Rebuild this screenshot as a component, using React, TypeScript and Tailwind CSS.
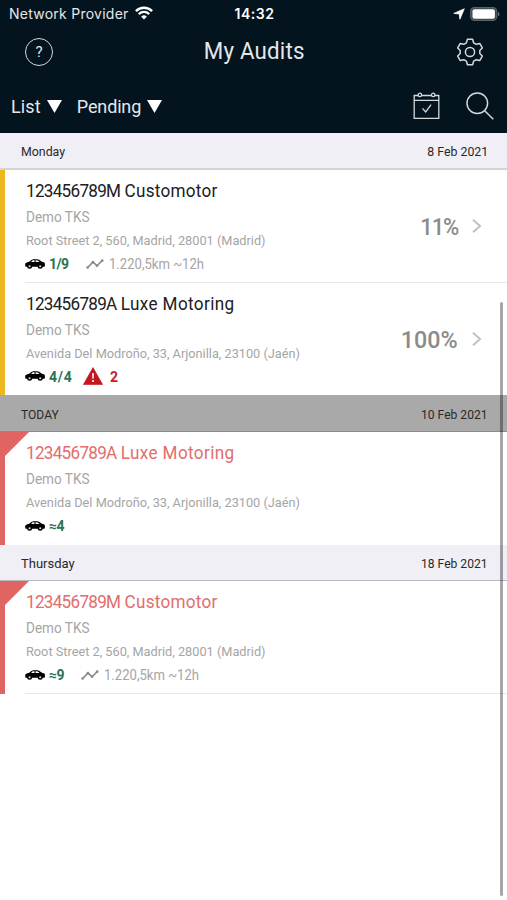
import type { ReactNode } from "react";

type Audit = {
  number: string;
  name: string;
  nameClass: string;
  address: string;
  count: string;
  countClass: string;
  route?: boolean;
  warnings?: number;
  percent?: string;
  percentClass?: string;
  overdue?: boolean;
  divider?: boolean;
};

type Section = {
  label: string;
  labelClass: string;
  date: string;
  dateClass: string;
  headerClass: string;
  audits: Audit[];
};

const customotor = {
  number: "123456789M",
  name: "Customotor",
  nameClass: "tracking-[0.3px]",
  address: "Root Street 2, 560, Madrid, 28001 (Madrid)",
};

const luxe = {
  number: "123456789A",
  name: "Luxe Motoring",
  nameClass: "tracking-[0.4px]",
  address: "Avenida Del Modroño, 33, Arjonilla, 23100 (Jaén)",
};

const sections: Section[] = [
  {
    label: "Monday",
    labelClass: "scale-x-[0.95]",
    date: "8 Feb 2021",
    dateClass: "scale-x-[0.95]",
    headerClass: "h-[37px] border-b-2 border-[#d4d4d5] bg-[#f0eff5] pt-0.5",
    audits: [
      { ...customotor, count: "1/9", countClass: "w-[37px] tracking-[-0.6px]", route: true, percent: "11%", percentClass: "scale-x-[0.92] tracking-[-1.3px]", divider: true },
      { ...luxe, count: "4/4", countClass: "w-[34px] tracking-[0.8px]", warnings: 2, percent: "100%", percentClass: "scale-x-[0.97]" },
    ],
  },
  {
    label: "TODAY",
    labelClass: "scale-x-[0.93]",
    date: "10 Feb 2021",
    dateClass: "scale-x-[0.93]",
    headerClass: "h-[37px] border-b border-[#8b8b8b] bg-[#a9a9a9] pt-[3px]",
    audits: [{ ...luxe, count: "≈4", countClass: "w-[32px] tracking-[-0.5px]", overdue: true }],
  },
  {
    label: "Thursday",
    labelClass: "",
    date: "18 Feb 2021",
    dateClass: "scale-x-[0.93]",
    headerClass: "h-[36.5px] border-b border-[#b9b8c0] bg-[#f0eff5] pt-[3px]",
    audits: [{ ...customotor, count: "≈9", countClass: "w-[32px] tracking-[-0.5px]", route: true, overdue: true, divider: true }],
  },
];

function CarIcon() {
  return (
    <svg viewBox="0 0 20 10" className="-mt-px h-[10px] w-5 shrink-0">
      <path
        fillRule="evenodd"
        d="M.2 4.8C1 3.6 2.6 3.1 4.2 2.8L6.3 1.1C7.1.4 8 .2 9.5.2h1.8c1.6 0 2.4.3 3.5 1l2.2 1.5 1.7.5c.8.3 1.1.8 1.2 1.6v1.9c0 .7-.4 1-1 1H1.3c-.8 0-1.1-.4-1.1-1.3ZM6.2 3h3.3V1.3H8.4c-.7 0-1 .2-1.4.5Zm4.4 0h4l-1.2-1c-.5-.5-1-.7-1.7-.7h-1.1Z"
      />
      <circle cx="4.6" cy="7.2" r="2.5" />
      <circle cx="15.2" cy="7.2" r="2.5" />
      <circle cx="4.6" cy="7.3" r="1.05" fill="#d8d8d8" />
      <circle cx="15.2" cy="7.3" r="1.05" fill="#d8d8d8" />
    </svg>
  );
}

function RouteIcon() {
  return (
    <svg viewBox="0 0 18 10" className="-mt-px h-[10px] w-[18px] shrink-0 fill-[#8c8c8c] stroke-[#8c8c8c]">
      <path d="M1.6 8.6 6.9 3.2 11 6.7 16.2 1.6" fill="none" strokeWidth="1.6" />
      <circle cx="1.6" cy="8.5" r="1.3" stroke="none" />
      <circle cx="6.9" cy="3.2" r="1.4" stroke="none" />
      <circle cx="11" cy="6.7" r="1.4" stroke="none" />
      <circle cx="16.2" cy="1.7" r="1.4" stroke="none" />
    </svg>
  );
}

function WarningIcon() {
  return (
    <svg viewBox="0 0 20 18" className="-mt-0.5 h-[18px] w-5 shrink-0">
      <path d="M10 .6 19.6 17.5H.4Z" fill="#c4161c" stroke="#c4161c" strokeWidth=".6" strokeLinejoin="round" />
      <path d="M9 6.3h2l-.4 5.4H9.4Z" fill="#fff" />
      <circle cx="10" cy="14" r="1.1" fill="#fff" />
    </svg>
  );
}

function StatusBar() {
  return (
    <div className="flex h-7 items-center justify-between pl-[9px] pr-[7px] font-['Inter','Liberation_Sans',sans-serif] text-white">
      <div className="flex flex-1 items-center gap-[6px] text-[14px] leading-5 text-[#e3e7e9]">
        <span className="whitespace-nowrap tracking-[0.25px]">Network Provider</span>
        <svg viewBox="0 0 18 14" className="-mt-0.5 h-[14px] w-[18px]" fill="none" stroke="#fff" strokeWidth="2.3">
          <path d="M.9 5.1a11.5 11.5 0 0 1 16.2 0" />
          <path d="M3.8 8.1a7.4 7.4 0 0 1 10.4 0" />
          <path d="M9 13.6 6.1 10.7a4.1 4.1 0 0 1 5.8 0Z" fill="#fff" stroke="none" />
        </svg>
      </div>
      <span className="text-[14px] font-semibold leading-5 tracking-[0.5px]">14:32</span>
      <div className="flex flex-1 items-center justify-end gap-[5px]">
        <svg viewBox="0 0 12 12" className="size-3">
          <path d="M11.3.8 6.9 11.2 6.3 6 .8 5.4Z" fill="#fff" stroke="#fff" strokeWidth=".8" strokeLinejoin="round" />
        </svg>
        <svg viewBox="0 0 30 14" className="-mt-px h-[14px] w-[30px]">
          <rect x=".7" y=".7" width="26" height="12.6" rx="3.6" fill="#3b484f" stroke="#56636a" strokeWidth="1.2" />
          <rect x="2.5" y="2.3" width="22.4" height="9.4" rx="2" fill="#fff" />
          <path d="M28 4.7c1.9.7 1.9 3.9 0 4.6Z" fill="#68737a" />
        </svg>
      </div>
    </div>
  );
}

function FilterButton({ children }: { children: ReactNode }) {
  return (
    <button className="flex items-center gap-[6px] whitespace-nowrap text-[18px] leading-6">
      {children}
      <svg viewBox="0 0 15 13" className="h-[13px] w-[15px]">
        <path d="M0 0h15L7.5 13Z" fill="#fff" />
      </svg>
    </button>
  );
}

function Header() {
  return (
    <header className="h-[133px] bg-[#03141e] text-[#e3e7e9]">
      <StatusBar />
      <div className="flex h-12 items-center justify-between pl-[25px] pr-[23px]">
        <div className="flex size-7 items-center justify-center rounded-full border-[1.5px] border-[#d3d8db] text-[15px]">?</div>
        <h1 className="-mt-0.5 scale-x-[0.93] text-[24px] leading-8 tracking-[0.2px]">My Audits</h1>
        <svg viewBox="0 0 28 28" className="size-7" fill="none" stroke="#d3d8db" strokeWidth="1.5" strokeLinejoin="round">
          <circle cx="14" cy="14" r="4.6" />
          <path d="M11.4 1.3h5.2l1 3.5 2.6 1.5 3.5-.9 2.6 4.5-2.5 2.6v3l2.5 2.6-2.6 4.5-3.5-.9-2.6 1.5-1 3.5h-5.2l-1-3.5-2.6-1.5-3.5.9-2.6-4.5 2.5-2.6v-3L1.7 9.9l2.6-4.5 3.5.9 2.6-1.5Z" />
        </svg>
      </div>
      <div className="flex h-[57px] items-center justify-between pl-[11px] pr-[13px] pt-[3px]">
        <div className="flex gap-[15px] pt-px">
          <FilterButton>
            <span className="tracking-[0.15px]">List</span>
          </FilterButton>
          <FilterButton>
            <span className="tracking-[-0.15px]">Pending</span>
          </FilterButton>
        </div>
        <div className="flex items-center gap-[26px]">
          <svg viewBox="0 0 27 28" className="h-7 w-[27px]" fill="none" stroke="#d3d8db" strokeWidth="1.3">
            <path d="M5.3 3.5H1.2v22.8h24.6V3.5h-4.1M8.4 3.5h10.3M1.2 8.3h24.6" />
            <circle cx="6.9" cy="2.9" r="1.7" />
            <circle cx="20.2" cy="2.9" r="1.7" />
            <path d="m9.5 16.4 3.2 3.6 5.4-7.3" />
          </svg>
          <svg viewBox="0 0 28 28" className="size-7" fill="none" stroke="#d3d8db" strokeWidth="1.5">
            <circle cx="11.3" cy="11.3" r="10.3" />
            <path d="M18.7 18.7 27.3 27.3" />
          </svg>
        </div>
      </div>
    </header>
  );
}

function AuditRow({ audit }: { audit: Audit }) {
  return (
    <article className="relative flex h-[112.5px]">
      <div className={audit.overdue ? "w-[5px] bg-[#df6462]" : "w-[5px] bg-[#edb81f]"} />
      {audit.overdue ? (
        <svg viewBox="0 0 24 24" className="absolute left-[5px] top-0 size-6">
          <path d="M0 0h24L0 24Z" fill="#df6462" />
        </svg>
      ) : null}
      <div className={audit.divider ? "ml-5 flex flex-1 border-b border-[#e7e7e7]" : "ml-5 flex flex-1"}>
        <div className="flex-1 whitespace-nowrap pl-px pt-[9px] text-[#a5a5a5]">
          <h2
            className={
              audit.overdue
                ? "origin-left scale-x-[0.95] text-[18px] leading-6 text-[#e26d6d]"
                : "origin-left scale-x-[0.95] text-[18px] leading-6 text-[#202020]"
            }
          >
            <span className="tracking-[-0.75px]">{audit.number}</span> <span className={audit.nameClass}>{audit.name}</span>
          </h2>
          <p className="mt-1 origin-left scale-x-[0.97] text-[14px] leading-5">Demo TKS</p>
          <p className="mt-[5px] origin-left scale-x-[0.98] text-[13px] leading-[18px]">{audit.address}</p>
          <div className="-ml-px mt-1 flex h-5 items-center text-[14px] leading-5">
            <CarIcon />
            <span className={`ml-1 font-bold text-[#2a7353] ${audit.countClass}`}>{audit.count}</span>
            {audit.route ? (
              <>
                <RouteIcon />
                <span className="ml-[5px] origin-left scale-x-[0.935]">1.220,5km ~12h</span>
              </>
            ) : null}
            {audit.warnings ? (
              <>
                <WarningIcon />
                <span className="ml-[7px] font-bold text-[#c4202a]">{audit.warnings}</span>
              </>
            ) : null}
          </div>
        </div>
        {audit.percent ? (
          <div className="flex items-center pr-[25px] pt-[3px] text-[24px] font-medium text-[#8b8b8b]">
            <span className={`origin-right ${audit.percentClass}`}>{audit.percent}</span>
            <svg viewBox="0 0 10 14" className="-mt-[3px] ml-[14px] h-[14px] w-[10px]" fill="none" stroke="#c1c1c3" strokeWidth="2">
              <path d="m1 .8 7 6.2-7 6.2" />
            </svg>
          </div>
        ) : null}
      </div>
    </article>
  );
}

export default function App() {
  return (
    <main className="relative h-[900px] w-[507px] overflow-hidden bg-white font-['Roboto','Liberation_Sans',sans-serif]">
      <Header />
      {sections.map((section) => (
        <section key={section.label}>
          <div className={`flex items-center justify-between pl-[21px] pr-[19px] text-[13px] leading-4 text-[#292929] ${section.headerClass}`}>
            <span className={`origin-left ${section.labelClass}`}>{section.label}</span>
            <span className={`origin-right ${section.dateClass}`}>{section.date}</span>
          </div>
          {section.audits.map((audit) => (
            <AuditRow key={audit.number} audit={audit} />
          ))}
        </section>
      ))}
      <div className="absolute left-[500px] top-[302px] h-[594px] w-[3px] rounded-full bg-black/35" />
    </main>
  );
}
